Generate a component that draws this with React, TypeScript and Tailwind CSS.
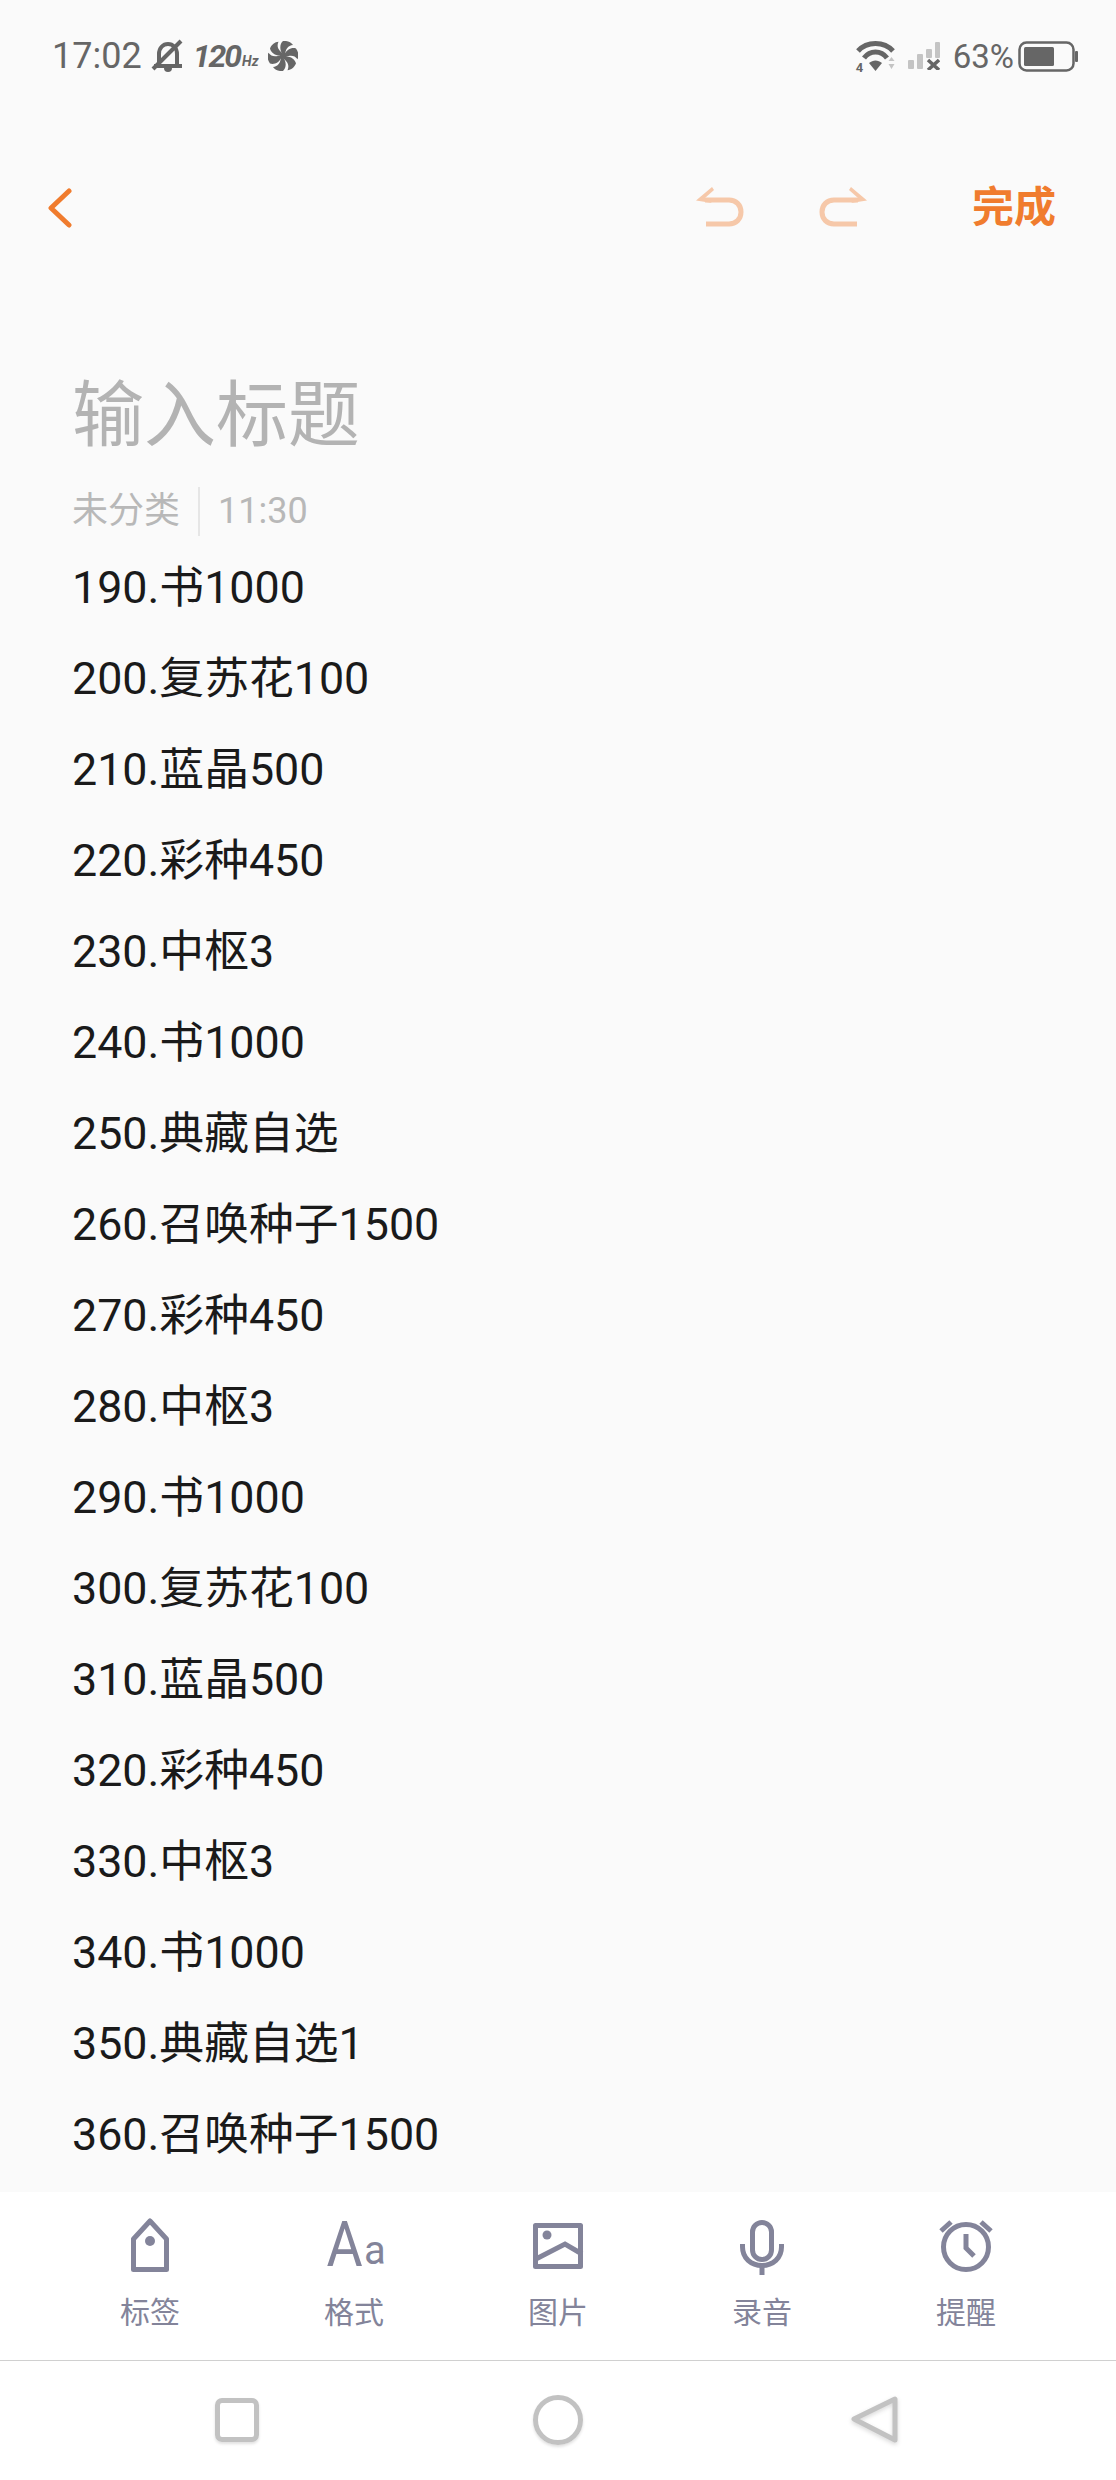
const noteLines = [
  '190.书1000',
  '200.复苏花100',
  '210.蓝晶500',
  '220.彩种450',
  '230.中枢3',
  '240.书1000',
  '250.典藏自选',
  '260.召唤种子1500',
  '270.彩种450',
  '280.中枢3',
  '290.书1000',
  '300.复苏花100',
  '310.蓝晶500',
  '320.彩种450',
  '330.中枢3',
  '340.书1000',
  '350.典藏自选1',
  '360.召唤种子1500',
];

const TagIcon = () => (
  <svg width="60" height="60" viewBox="0 0 60 60" fill="none" stroke="#83849a" strokeWidth="5">
    <path d="M30 6 L46.5 24 V54.5 H13.5 V24 Z" strokeLinejoin="round" />
    <circle cx="30" cy="26" r="5" fill="#83849a" stroke="none" />
  </svg>
);

const FormatIcon = () => (
  <div className="flex h-[60px] w-[60px] items-end justify-center text-[#83849a] font-['Roboto',sans-serif]">
    <span className="inline-block w-[40px] shrink-0 origin-center scale-x-[0.88] text-center text-[63px] leading-[60px]">A</span>
    <span className="inline-block w-[20px] shrink-0 text-center text-[40px] leading-[48px]">a</span>
  </div>
);

const ImageIcon = () => (
  <svg width="60" height="60" viewBox="0 0 60 60" fill="none" stroke="#83849a" strokeWidth="5">
    <rect x="7.5" y="10.5" width="45" height="41" strokeLinejoin="round" />
    <circle cx="19" cy="20" r="4.5" fill="#83849a" stroke="none" />
    <path d="M6 45 L37 29 L54 39" />
  </svg>
);

const MicIcon = () => (
  <svg width="60" height="60" viewBox="0 0 60 60" fill="none" stroke="#83849a" strokeWidth="5">
    <rect x="20.5" y="7.5" width="19" height="37" rx="9.5" />
    <path d="M10.5 29 V32 C10.5 43 19 50.5 30 50.5 C41 50.5 49.5 43 49.5 32 V29" />
    <path d="M30 50 V60" />
  </svg>
);

const ClockIcon = () => (
  <svg width="60" height="60" viewBox="0 0 60 60" fill="none" stroke="#83849a" strokeWidth="5">
    <circle cx="30" cy="32" r="22.5" />
    <path d="M30 19 V33 L38 41" />
    <path d="M5 16 L15 7" />
    <path d="M45 7 L55 16" />
  </svg>
);

const tabs = [
  { label: '标签', icon: <TagIcon /> },
  { label: '格式', icon: <FormatIcon /> },
  { label: '图片', icon: <ImageIcon /> },
  { label: '录音', icon: <MicIcon /> },
  { label: '提醒', icon: <ClockIcon /> },
];

const StatusLeft = () => (
  <div className="flex items-center text-[#666666]">
    <span className="text-[36px] leading-none">17:02</span>
    <svg className="ml-[9px]" width="34" height="34" viewBox="0 0 34 34" fill="none" stroke="#666666" strokeWidth="4">
      <path d="M3 27 H31 M8 27 V15 C8 9 12 5 17 5 C22 5 26 9 26 15 V27" />
      <path d="M2 30 L30 2" />
      <path d="M13 29 A4 4 0 0 0 21 29 Z" fill="#666666" stroke="none" />
    </svg>
    <span className="ml-[8px] text-[32px] leading-none font-bold italic tracking-[-2px]">120</span>
    <span className="ml-[2px] mt-[10px] text-[14px] leading-none font-bold italic">Hz</span>
    <svg className="ml-[9px]" width="30" height="30" viewBox="-15 -15 30 30" fill="#666666">
      {[0, 60, 120, 180, 240, 300].map((deg) => (
        <path key={deg} transform={`rotate(${deg})`} d="M-0.5 -2 C-3.5 -6 -3.5 -12 0 -15 C4 -15.5 8 -14 10 -11 C5 -10.5 2.5 -7 2 -1 Z" />
      ))}
      <circle r="2.5" />
    </svg>
  </div>
);

const StatusRight = () => (
  <div className="flex items-center text-[#666666]">
    <div className="relative h-[32px] w-[40px]">
      <svg width="40" height="32" viewBox="0 0 40 32" fill="none" stroke="#666666" strokeWidth="5">
        <path d="M2 11 C11 1 28 1 37 11" />
        <path d="M8 18 C14 10 25 10 31 18" />
        <path d="M13 23 L19.5 31 L26 23 C22 19.5 17 19.5 13 23 Z" fill="#666666" stroke="none" />
        <path d="M32.5 21 H38.5 L35.5 17 Z M32.5 24 H38.5 L35.5 29 Z" fill="#c4c4c4" stroke="none" />
      </svg>
      <span className="absolute bottom-[-2px] left-0 text-[13px] leading-none font-bold">4</span>
    </div>
    <svg className="ml-[12px]" width="32" height="28" viewBox="0 0 32 28" fill="#c4c4c4">
      <rect x="0" y="18" width="6" height="9" rx="1" />
      <rect x="9" y="12" width="6" height="15" rx="1" />
      <rect x="18" y="7" width="6" height="9" rx="1" />
      <rect x="27" y="0" width="5" height="16" rx="1" />
      <path d="M20 18 L31 28 M31 18 L20 28" stroke="#666666" strokeWidth="3.5" />
    </svg>
    <span className="ml-[13px] text-[33px] leading-none">63%</span>
    <svg className="ml-[4px]" width="60" height="31" viewBox="0 0 60 31" fill="none">
      <rect x="1.5" y="1.5" width="54" height="28" rx="7" stroke="#666666" strokeWidth="2.5" />
      <rect x="6" y="6" width="30" height="19" rx="1.5" fill="#666666" />
      <rect x="57" y="10" width="3" height="11" rx="1" fill="#666666" />
    </svg>
  </div>
);

export default function App() {
  return (
    <div className="flex h-[2480px] w-[1116px] flex-col bg-[#fafafa] font-['Roboto','Noto_Sans_CJK_SC',sans-serif]">
      <div className="flex h-[112px] items-center justify-between pl-[52px] pr-[38px]">
        <StatusLeft />
        <StatusRight />
      </div>

      <div className="flex h-[190px] items-center pl-[48px] pr-[60px]">
        <svg className="mt-[2px]" width="24" height="40" viewBox="0 0 24 40" fill="none" stroke="#f07c2e" strokeWidth="5" strokeLinecap="round" strokeLinejoin="round">
          <path d="M21 3 L3 20 L21 37" />
        </svg>
        <svg className="ml-[624px]" width="48" height="40" viewBox="0 0 48 40" fill="none" stroke="#f6c8a9" strokeWidth="5">
          <path d="M9 13 H33 C40 13 45 18 45 25 C45 32 40 37 33 37 H10" />
          <path d="M0 13.5 L16 0 L18 3 L9 11 L16 16 Z" fill="#f6c8a9" stroke="none" />
        </svg>
        <svg className="ml-[75px]" width="48" height="40" viewBox="0 0 48 40" fill="none" stroke="#f6c8a9" strokeWidth="5">
          <path d="M39 13 H15 C8 13 3 18 3 25 C3 32 8 37 15 37 H38" />
          <path d="M48 13.5 L32 0 L30 3 L39 11 L32 16 Z" fill="#f6c8a9" stroke="none" />
        </svg>
        <span className="ml-auto mt-[2px] text-[42px] leading-none font-bold text-[#f07c2e]">完成</span>
      </div>

      <div className="flex-1 px-[72px] pt-[74px]">
        <h1 className="text-[72px] leading-[80px] font-normal text-[#b3b3b3]">输入标题</h1>
        <div className="mt-[30px] flex h-[50px] items-center text-[36px] text-[#b8b8b8]">
          <span>未分类</span>
          <div className="mx-[18px] h-[49px] w-[2px] bg-[#e6e6e6]" />
          <span>11:30</span>
        </div>
        <div className="mt-[6px] text-[44.8px] leading-[91px] text-[#1a1a1a]">
          {noteLines.map((line, i) => (
            <div key={i}>{line}</div>
          ))}
        </div>
      </div>

      <div className="grid h-[168px] grid-cols-5 bg-white px-[48px]">
        {tabs.map((tab) => (
          <div key={tab.label} className="flex flex-col items-center pt-[23px]">
            {tab.icon}
            <span className="mt-[18px] text-[30px] leading-[40px] text-[#83849a]">{tab.label}</span>
          </div>
        ))}
      </div>

      <div className="flex h-[120px] items-center border-t border-[#d0d0d0] bg-white pb-[2px]">
        <div className="ml-[215px] h-[44px] w-[44px] rounded-[7px] border-[5px] border-[#c2c2c2] shadow-[0_2px_3px_rgba(0,0,0,0.12)]" />
        <div className="ml-[274px] h-[50px] w-[50px] rounded-full border-[5px] border-[#c2c2c2] shadow-[0_2px_3px_rgba(0,0,0,0.12)]" />
        <svg className="ml-[268px] drop-shadow-[0_2px_2px_rgba(0,0,0,0.15)]" width="48" height="50" viewBox="0 0 48 50" fill="none" stroke="#c2c2c2" strokeWidth="5" strokeLinejoin="round">
          <path d="M44 4 V45 L3 24 Z" />
        </svg>
      </div>
    </div>
  );
}
